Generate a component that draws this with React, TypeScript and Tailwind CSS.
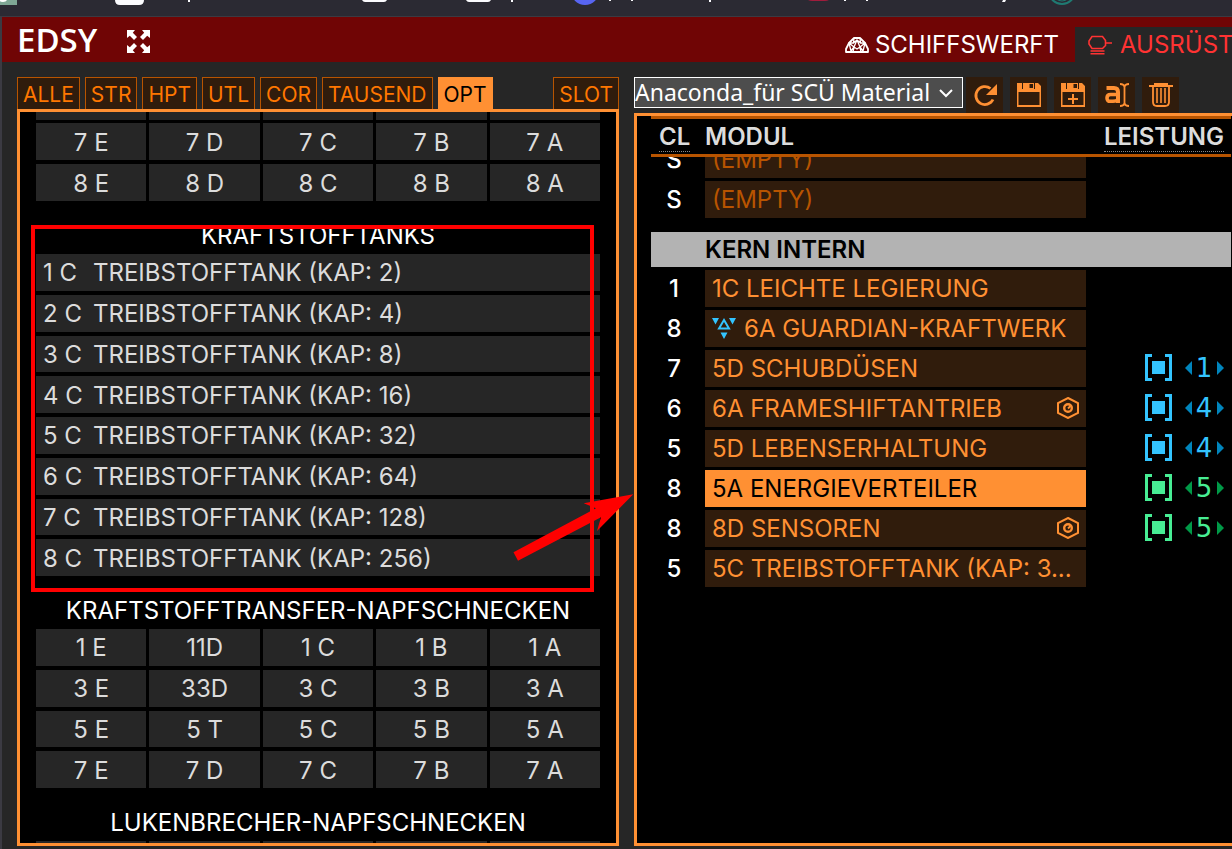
import type { ReactNode } from "react";

const CLASSES = ["E", "D", "C", "B", "A"];
const TABS = ["ALLE", "STR", "HPT", "UTL", "COR", "TAUSEND", "OPT"];
const TANKS = [2, 4, 8, 16, 32, 64, 128, 256];
const TRANSFER = [
  ["1 E", "11D", "1 C", "1 B", "1 A"],
  ["3 E", "33D", "3 C", "3 B", "3 A"],
  ["5 E", "5 T", "5 C", "5 B", "5 A"],
  ["7 E", "7 D", "7 C", "7 B", "7 A"],
];

type Slot = { cl: string; name: string; power?: number; eng?: boolean; guardian?: boolean; active?: boolean };

const SLOTS: Slot[] = [
  { cl: "1", name: "1C LEICHTE LEGIERUNG" },
  { cl: "8", name: "6A GUARDIAN-KRAFTWERK", guardian: true },
  { cl: "7", name: "5D SCHUBDÜSEN", power: 1 },
  { cl: "6", name: "6A FRAMESHIFTANTRIEB", power: 4, eng: true },
  { cl: "5", name: "5D LEBENSERHALTUNG", power: 4 },
  { cl: "8", name: "5A ENERGIEVERTEILER", power: 5, active: true },
  { cl: "8", name: "8D SENSOREN", power: 5, eng: true },
  { cl: "5", name: "5C TREIBSTOFFTANK (KAP: 3..." },
];

const BookmarkStrip = () => (
  <div className="h-4 overflow-hidden bg-[#2b2a33]">
    <svg width="1232" height="16" aria-hidden="true">
      <path d="M0 0h17v5H0z" fill="#7fa795" />
      <path d="M0 0h7q-1 2-4 2T0 1z" fill="#fff" />
      <path d="M115 0h29q0 5-5 5h-19q-5 0-5-5zM362 0h25q-1 2-3 2h-19q-2 0-3-2zM466 0h25q-1 2-3 2h-19q-2 0-3-2z" fill="#fbfbfe" />
      <circle cx="585" cy="-9" r="14" fill="#5865f2" />
      <path d="M808 0h21q-2 1-4 1h-13q-2 0-4-1z" fill="#a01c3c" />
      <g fill="none" stroke="#1f7a72">
        <circle cx="1062" cy="-9" r="13" strokeWidth="2" />
        <circle cx="1062" cy="-8" r="9" />
      </g>
      <path d="M188 0h2v2h-2zM511 0h2v2h-2zM609 0h2v1h-2zM631 0h2v1h-2zM709 0h2v2h-2zM844 0h2v1h-2zM866 0h2v1h-2zM1003 0h3l-1 2h-3z" fill="#fbfbfe" />
    </svg>
  </div>
);

const ExpandIcon = () => (
  <svg width="23" height="23" viewBox="0 0 23 23" fill="#fff">
    <path d="M0 0h8L5.8 2.8 10 7 7 10 2.8 5.8 0 8zM23 0v8l-2.8-2.2L16 10l-3-3 4.2-4.2L15 0zM0 23v-8l2.8 2.2L7 13l3 3-4.2 4.2L8 23zM23 23h-8l2.2-2.8L13 16l3-3 4.2 4.2L23 15z" />
  </svg>
);

const DomeIcon = () => (
  <svg width="24" height="16" viewBox="0 0 24 16" fill="none" stroke="#fff" strokeLinejoin="round">
    <path d="M1 15v-3l3-6 5-5h6l5 5 3 6v3z" strokeWidth="1.8" />
    <path d="M8 15l1-5 3-7 3 7 1 5M4 6l2 8 3-4-5-4 5 0M20 6l-2 8-3-4 5-4-5 0M9 1l-.5 5L12 3l3.500 3L15 1M9 10l3 2 3-2" strokeWidth="1.3" />
  </svg>
);

const OutfitIcon = () => (
  <svg width="24" height="20" viewBox="0 0 24 20" fill="none" stroke="#ff3333" strokeWidth="1.6">
    <path d="M4 1.500h10.500l3 4v5l-3 3H4L1 9V6zM17.500 8H24M2.500 16h14M2.500 18.800h14" />
  </svg>
);

const RefreshIcon = () => (
  <svg width="24" height="24" viewBox="0 0 24 24" fill="none">
    <path d="M20 16.500A9 9 0 1 1 17.500 5.500" stroke="#ff9033" strokeWidth="2.800" />
    <path d="M24 1v11H13z" fill="#ff9033" />
  </svg>
);

const SaveIcon = ({ plus }: { plus?: boolean }) => (
  <svg width="24" height="24" viewBox="0 0 24 24" fill="#ff9033">
    <path fillRule="evenodd" d="M0 0h5v6h13V0h3l3 3v21H0zM1.500 9v13h21V9z" />
    <path fillRule="evenodd" d="M6 0h11v7H6zM12.500 1v4H16V1z" />
    {plus && <path d="M11 11h2v4h4v2h-4v4h-2v-4H7v-2h4z" />}
  </svg>
);

const RenameIcon = () => (
  <svg width="24" height="24" viewBox="0 0 24 24" fill="none" stroke="#ff9033">
    <path d="M1.500 5H9q4 0 4 4v11" strokeWidth="4" />
    <path d="M13 11.500H5.500Q2 11.500 2 15t3.500 3.300H8q4 0 5-2" strokeWidth="3.600" />
    <path d="M15 1q4 0 4.500 3Q20 1 24 1M19.500 4v17M15 23q4 0 4.500-3 .5 3 4.500 3" strokeWidth="1.800" />
  </svg>
);

const TrashIcon = () => (
  <svg width="24" height="24" viewBox="0 0 24 24" fill="none" stroke="#ff9033">
    <path d="M6 2V1h12v1" strokeWidth="2" />
    <path d="M0 3h24" strokeWidth="2" />
    <path d="M4 4v15q0 4 4 4h8q4 0 4-4V4" strokeWidth="1.800" />
    <path d="M8 5v15M12 5v15M16 5v15" strokeWidth="1.600" />
  </svg>
);

const GuardianIcon = () => (
  <svg width="24" height="21" viewBox="0 0 24 21" fill="#33c4ff">
    <path d="M0 0h7L3.500 6.500zM17 0h7l-3.500 6.500zM8.500 14.500h7L12 21z" />
    <path d="M12 2 7 10.500h10z" fill="none" stroke="#33c4ff" strokeWidth="2" />
  </svg>
);

const EngineerIcon = () => (
  <svg width="22" height="22" viewBox="0 0 22 22" fill="none" stroke="#ff9033">
    <path d="m11 1 10 5.200v9.600L11 21 1 15.800V6.200z" strokeWidth="2" />
    <circle cx="11" cy="11" r="3.800" strokeWidth="2.400" />
    <path d="m11 11.500 2.500-2.500" strokeWidth="1.800" />
  </svg>
);

const Power = ({ value }: { value: number }) => {
  const green = value === 5;
  const main = green ? "#47ed94" : "#33c4ff";
  const dim = green ? "#009947" : "#0085bd";
  return (
    <div className="flex h-[37px] items-center justify-end pr-[7px] pb-[2px]">
      <svg width="27" height="27" viewBox="0 0 27 27" fill={main}>
        <path d="M0 0h7v3H3v21h4v3H0zM27 0h-7v3h4v21h-4v3h7zM7 7h13v13H7z" />
      </svg>
      <button aria-label="Weniger" className="ml-3">
        <svg width="8" height="14" viewBox="0 0 8 14" fill={dim}><path d="M8 0v14L1 7z" /></svg>
      </button>
      <span
        className={
          green
            ? "w-6 text-center font-[DejaVu_Sans,sans-serif] text-[26px] leading-8 text-[#47ed94]"
            : "w-6 text-center font-[DejaVu_Sans,sans-serif] text-[26px] leading-8 text-[#33c4ff]"
        }
      >
        {value}
      </span>
      <button aria-label="Mehr">
        <svg width="8" height="14" viewBox="0 0 8 14" fill={dim}><path d="M1 0v14l7-7z" /></svg>
      </button>
    </div>
  );
};

const GroupTitle = ({ children }: { children: ReactNode }) => (
  <h2 className="h-[53px] pt-4 text-center text-2xl leading-[38px] text-white">{children}</h2>
);

const cell = "flex items-center justify-center bg-[#262626] pt-[2px] text-2xl leading-8 text-[#dcdcdc]";

const ModuleList = () => (
  <div className="relative min-h-0 flex-1 overflow-hidden border-[3px] border-[#ff9033] bg-black px-4">
    <div className="mb-[3px] grid grid-cols-5 gap-x-[3px]">
      {CLASSES.map((c) => <div key={c} className="h-2 bg-[#262626]" />)}
    </div>
    <div className="grid h-[78px] grid-cols-5 grid-rows-2 gap-x-[3px] gap-y-1">
      {["7", "8"].map((n) => CLASSES.map((c) => (
        <button key={n + c} className={cell}>{n} {c}</button>
      )))}
    </div>
    <GroupTitle>KRAFTSTOFFTANKS</GroupTitle>
    <div className="grid h-[322px] grid-rows-8 gap-y-1">
      {TANKS.map((cap, i) => (
        <button key={cap} className="flex items-center gap-2 bg-[#262626] px-[7px] pt-[2px] text-2xl leading-8 whitespace-nowrap text-[#dcdcdc]">
          <span className="w-[42px] text-left">{i + 1} C</span>
          <span>TREIBSTOFFTANK (KAP: {cap})</span>
        </button>
      ))}
    </div>
    <GroupTitle>KRAFTSTOFFTRANSFER-NAPFSCHNECKEN</GroupTitle>
    <div className="grid h-[159px] grid-cols-5 grid-rows-4 gap-x-[3px] gap-y-1">
      {TRANSFER.flat().map((label) => (
        <button key={label} className={cell}>{label}</button>
      ))}
    </div>
    <GroupTitle>LUKENBRECHER-NAPFSCHNECKEN</GroupTitle>
    <div className="grid grid-cols-5 gap-x-[3px]">
      {CLASSES.map((c) => <div key={c} className="h-9 bg-[#262626]" />)}
    </div>
  </div>
);

const tab = "h-8 border border-b-0 border-[#b85400] bg-[#301c0c] px-[5px] pt-px text-[21px] leading-8 text-[#ff7700]";
const activeTab = "h-8 border border-b-0 border-[#ff9033] bg-[#ff9033] px-[5px] pt-px text-[21px] leading-8 text-black";
const tool = "flex h-9 w-[37px] items-center justify-center bg-[#301c0c]";

const SlotTable = () => (
  <div className="min-h-0 flex-1 overflow-hidden border-[3px] border-r-0 border-[#ff9033] bg-black pr-px pl-[14px]">
    <table className="w-full table-fixed border-separate border-spacing-0 text-2xl">
      <colgroup>
        <col className="w-[54px]" />
        <col className="w-[381px]" />
        <col />
      </colgroup>
      <thead>
        <tr className="text-left leading-8 text-[#dcdcdc]">
          <th className="h-[41px] border-y-[3px] border-[#b85400] pl-2 font-semibold">
            <span className="border-b border-dotted border-[#8a8a8a]">CL</span>
          </th>
          <th className="border-y-[3px] border-[#b85400] font-semibold">MODUL</th>
          <th className="border-y-[3px] border-[#b85400] pr-[7px] text-right font-semibold">
            <span className="border-b border-dotted border-[#8a8a8a]">LEISTUNG</span>
          </th>
        </tr>
      </thead>
      <tbody>
        <tr>
          <td className="pb-[3px]">
            <div className="flex h-[21px] items-end justify-center overflow-hidden pr-2">
              <span className="h-[37px] leading-[37px] font-medium text-white">S</span>
            </div>
          </td>
          <td className="pb-[3px]">
            <div className="flex h-[21px] items-end overflow-hidden bg-[#301c0c] px-[7px]">
              <span className="h-[37px] leading-[37px] text-[#b85400]">(EMPTY)</span>
            </div>
          </td>
          <td />
        </tr>
        <tr>
          <td className="pr-2 pb-[14px] text-center font-medium text-white">S</td>
          <td className="pb-[14px]">
            <button className="flex h-[37px] w-full items-center bg-[#301c0c] px-[7px] text-[#b85400]">(EMPTY)</button>
          </td>
          <td />
        </tr>
        <tr className="text-left">
          <th className="h-[35px] bg-[#b3b3b3]" />
          <th colSpan={2} className="bg-[#b3b3b3] leading-8 font-semibold text-black">KERN INTERN</th>
        </tr>
        {SLOTS.map((s, i) => (
          <tr key={i}>
            <td className="pt-[3px] pr-2 text-center font-medium text-white">{s.cl}</td>
            <td className="pt-[3px]">
              <button
                className={
                  s.active
                    ? "flex h-[37px] w-full items-center bg-[#ff9033] px-[7px] whitespace-nowrap text-black"
                    : "flex h-[37px] w-full items-center bg-[#301c0c] px-[7px] whitespace-nowrap text-[#ff9033]"
                }
              >
                {s.guardian && <span className="mr-2"><GuardianIcon /></span>}
                {s.name}
                {s.eng && <span className="ml-auto pb-[2px]"><EngineerIcon /></span>}
              </button>
            </td>
            <td className="pt-[3px]">{s.power && <Power value={s.power} />}</td>
          </tr>
        ))}
      </tbody>
    </table>
  </div>
);

const Annotation = () => (
  <>
    <div className="pointer-events-none absolute top-[225px] left-[31px] h-[367px] w-[563px] border-4 border-[#ff0000]" />
    <svg className="pointer-events-none absolute top-[490px] left-[510px]" width="126" height="76" viewBox="510 490 126 76">
      <path d="m513.500 552.300 82.500-44-12.300-5 49.600-9L597 531l4-13.700-83 43.400z" fill="#ff0000" />
    </svg>
  </>
);

export default function App() {
  return (
    <div className="relative flex h-screen flex-col overflow-hidden bg-[#262626] font-[Inter,sans-serif]">
      <BookmarkStrip />
      <div className="flex min-h-0 flex-1 flex-col border-t border-l-2 border-[#3b3a42]">
        <header className="flex h-[45px] shrink-0 items-center bg-[#700505] pl-[15px] text-white">
          <h1 className="font-[Open_Sans,sans-serif] text-[33px] leading-[44px] font-semibold">EDSY</h1>
          <button aria-label="Vollbild" className="mt-1 ml-[30px]"><ExpandIcon /></button>
          <nav className="ml-auto flex h-[35px] self-end overflow-hidden text-2xl leading-[35px] whitespace-nowrap">
            <a href="#werft" className="flex items-center gap-[6px] pr-4"><DomeIcon />SCHIFFSWERFT</a>
            <a href="#ausruestung" className="flex w-[157px] items-center gap-2 bg-[#262626] pl-[13px] text-[#ff3333]">
              <span className="shrink-0"><OutfitIcon /></span>AUSRÜST
            </a>
          </nav>
        </header>
        <main className="grid min-h-0 flex-1 grid-cols-[602px_1fr] grid-rows-1 gap-[15px] pt-[15px] pb-[3px] pl-[15px]">
          <section className="flex min-h-0 flex-col">
            <div className="flex gap-[5px]">
              {TABS.map((t) => (
                <button key={t} className={t === "OPT" ? activeTab : tab}>{t}</button>
              ))}
              <button className={tab + " ml-auto"}>SLOT</button>
            </div>
            <ModuleList />
          </section>
          <section className="flex min-h-0 min-w-0 flex-col">
            <div className="flex h-9 shrink-0 gap-[7px]">
              <div className="relative -mr-1 h-[31px] w-[329px]">
                <select
                  aria-label="Build"
                  className="h-full w-full appearance-none border border-white bg-[#4d4d4d] pb-[2px] font-[Noto_Sans,sans-serif] text-[23px] leading-7 text-white"
                >
                  <option>Anaconda_für SCÜ Material</option>
                </select>
                <svg className="pointer-events-none absolute top-3 right-[10px]" width="14" height="9" viewBox="0 0 14 9" fill="none" stroke="#fff" strokeWidth="2">
                  <path d="m1 1 6 6 6-6" />
                </svg>
              </div>
              <button aria-label="Neu laden" className={tool}><RefreshIcon /></button>
              <button aria-label="Speichern" className={tool}><SaveIcon /></button>
              <button aria-label="Speichern als" className={tool}><SaveIcon plus /></button>
              <button aria-label="Umbenennen" className={tool}><RenameIcon /></button>
              <button aria-label="Löschen" className={tool}><TrashIcon /></button>
            </div>
            <SlotTable />
          </section>
        </main>
      </div>
      <Annotation />
    </div>
  );
}
